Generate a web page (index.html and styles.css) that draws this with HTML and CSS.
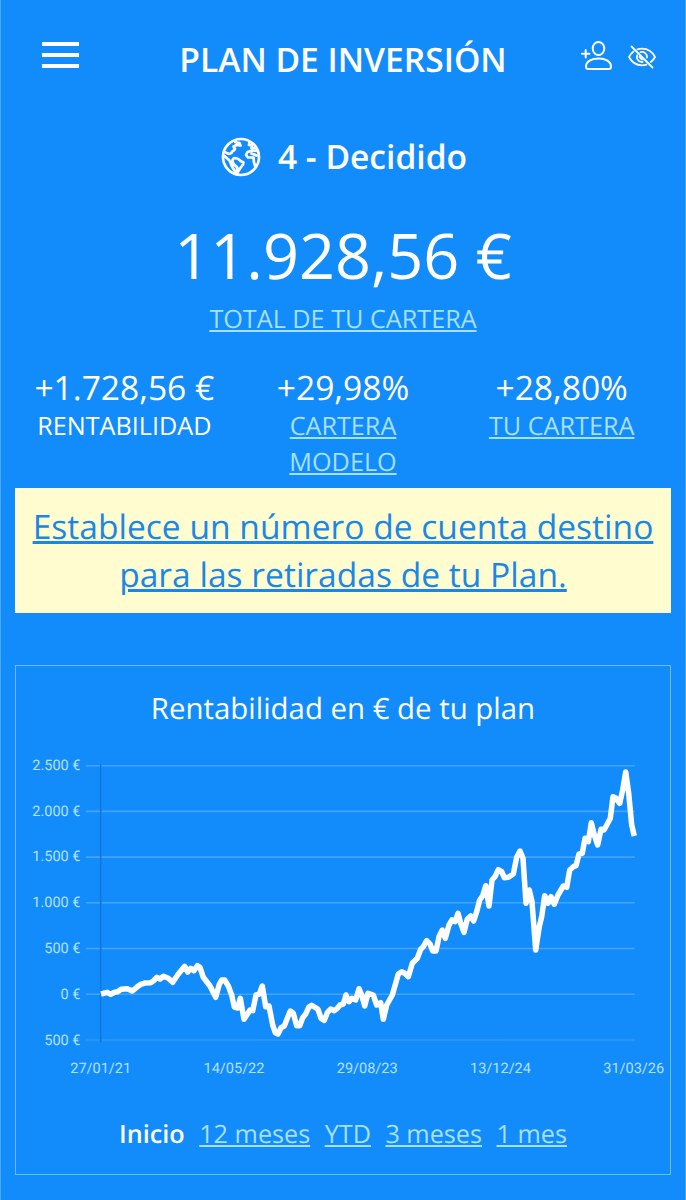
FILE: index.html
```
<!DOCTYPE html>
<html lang="es">
<head>
    <meta charset="UTF-8">
    <meta name="viewport" content="width=device-width, initial-scale=1.0">
    <title>Plan de inversión</title>
    <link rel="stylesheet" href="styles.css">
</head>
<body>
    <header class="topbar">
        <button class="menu" aria-label="Menú"><span></span><span></span><span></span></button>
        <h1>PLAN DE INVERSIÓN</h1>
        <div class="actions">
            <svg class="icon-user" viewBox="0 0 32 32">
                <ellipse cx="17.500" cy="7.500" rx="5.800" ry="6.500"/>
                <path d="M5 25.500c0-5 5.300-8 12.500-8s12.500 3 12.500 8c0 1.700-.7 2.500-2.200 2.500H7.200c-1.500 0-2.200-.8-2.200-2.500zM1 12.700h7.400M4.700 9v7.400"/>
            </svg>
            <svg class="icon-eye" viewBox="0 0 28 24">
                <path d="M3.500 1.500l21 21"/>
                <path d="M5.500 6.500C3.500 8 2 10 1 12c2.800 5.400 7.800 8.300 13 8.300 1.500 0 3-.2 4.400-.7M9.500 4.400c1.400-.5 3-.7 4.500-.7 5.200 0 10.200 2.900 13 8.300-1 2-2.400 3.700-4.200 5"/>
                <path d="M12.500 7.200c3.500-1 6.800 1.600 6.500 5.300M9.200 10.300c-1.200 3.500 1.300 7 5.300 6.700M11.500 12l2.500 2.500"/>
            </svg>
        </div>
    </header>

    <div class="profile">
        <svg class="icon-globe" viewBox="0 0 40 40">
            <circle cx="20" cy="20" r="18"/>
            <path d="M4 15c2.500 2 5 2 6.500 1 0-2.500 3-2 3.500-4l-1.500-2.500 3-1.500 4 .5-1-2.500-4.500-1"/>
            <path d="M3.500 19l5 4.500 2.500 6 5 8M11.500 23l1.500-2c3 0 5 1 6.500 3l3 1.500c0 3-2.500 4-3.500 6l-2.500 4-.5-5.500c-2.500-1.500-4.500-4-4.500-7z"/>
            <path d="M28.500 5l-.5 3 3 .5-.5 2.500h4M36 14l-5-.5-4.500 1.500-1.500 3 2 2.500 5.500 0 .5 5 1.500 4.500M30.500 16.500l5 2"/>
        </svg>
        <span>4 - Decidido</span>
    </div>

    <div class="total">
        <div class="amount">11.928,56 €</div>
        <a href="#">TOTAL DE TU CARTERA</a>
    </div>

    <div class="stats">
        <div class="stat">
            <div class="value">+1.728,56 €</div>
            <span>RENTABILIDAD</span>
        </div>
        <div class="stat">
            <div class="value">+29,98%</div>
            <a href="#">CARTERA MODELO</a>
        </div>
        <div class="stat">
            <div class="value">+28,80%</div>
            <a href="#">TU CARTERA</a>
        </div>
    </div>

    <div class="notice">
        <a href="#">Establece un número de cuenta destino para las retiradas de tu Plan.</a>
    </div>

    <div class="card">
        <h2>Rentabilidad en € de tu plan</h2>
        <svg class="chart" viewBox="16 750 654 340">
            <path class="grid" d="M86.500 765.700H634M86.500 811.400H634M86.500 857.100H634M86.500 902.800H634M86.500 948.500H634M86.500 994.300H634"/>
            <path class="grid grid-last" d="M86.500 1040H634"/>
            <path class="axis" d="M100.700 765V1042"/>
            <g class="y-labels">
                <text x="80.500" y="770">2.500 €</text>
                <text x="80.500" y="815.700">2.000 €</text>
                <text x="80.500" y="861.400">1.500 €</text>
                <text x="80.500" y="907.100">1.000 €</text>
                <text x="80.500" y="953">500 €</text>
                <text x="80.500" y="999">0 €</text>
                <text x="80.500" y="1044.700">500 €</text>
            </g>
            <g class="x-labels">
                <text x="100.700" y="1073">27/01/21</text>
                <text x="234" y="1073">14/05/22</text>
                <text x="367.200" y="1073">29/08/23</text>
                <text x="500.500" y="1073">13/12/24</text>
                <text x="633.700" y="1073">31/03/26</text>
            </g>
            <polyline class="line" points="101,994 107.3,992.3 110.7,994.3 114.7,992.3 117.7,991.7 121,989.3 127.3,988.7 132.3,991 136.7,987.3 140.7,984.3 145,983 150.7,982.7 153.3,981 157,977.3 160,979 163.3,976.3 168.3,978.3 172.7,982.3 178.3,974 184.7,966.3 187.7,972 190.7,968.3 194,970.7 197.3,965.7 200,967.3 203.3,977.3 210,986 215.7,997.3 219.3,984.3 221.7,980 224.7,980 228.3,986 231.7,995 234.3,1007 237.7,1008 240.3,998.3 244,1019.3 250,1010 252.7,1010.7 256,995 259.3,994 262.3,986 265.7,1006.7 269,1006 272.7,1025 275.3,1032.7 278,1034 281,1027.7 284.3,1026 287.3,1018.3 290.3,1011 293.3,1013.3 296.7,1025.7 299.7,1025.7 302.7,1017.7 305.7,1014 308.7,1007.3 311.7,1005.3 318,1009.3 321,1018.3 324.3,1020.3 327.3,1012.7 330.7,1009 334.3,1010.7 337.3,1008.3 340,1005 343.3,1004 346,995 349,1001.7 352,998.3 355.7,1000 359,988.7 361.7,995 364.7,1006 368,993.3 373.3,995 376.7,1005 380.7,1002.7 383.3,1019.3 386.7,1005 392.3,995 395.7,983.3 398.3,974 401.7,971.7 404.7,973.3 408.3,976.7 412.3,963.3 417.3,958.3 420.7,949.3 423.3,946.7 426.7,940.7 430,944 432.7,951 436,951 439,936.7 442.3,930 445.3,938.3 449,925 452,920 455,921.7 458,913.3 460.7,923.3 464,932.3 467.3,919.3 470.7,916 473.7,921 476.7,911.7 479.7,900 482.7,895.7 485.7,885.7 489,906 492,880 495,876.7 498.3,869.7 501.7,871.7 504.3,877.7 508.3,877.3 513.3,874 516.7,857.3 520,851 523,858.3 526,903.3 529.3,890 532,901.7 535.7,950 539.3,926.7 541.7,916.7 544.7,895.7 548,903.3 551,896.7 554.3,904.3 558,895 563.3,886 566.7,887.3 569.7,870 573.3,866.7 576,865.7 579,854 582.3,853.3 585,838.3 588.3,841.7 591.3,822.7 594.3,835 597.7,845 601,829.3 604,830 607.3,824 610.3,818.3 613,796.7 616,798.3 619.7,803.3 622.7,790 625.7,772 628.7,793.3 631.7,825 634.3,836"/>
        </svg>
        <nav class="periods">
            <strong>Inicio</strong>
            <a href="#">12 meses</a>
            <a href="#">YTD</a>
            <a href="#">3 meses</a>
            <a href="#">1 mes</a>
        </nav>
    </div>
</body>
</html>
```

FILE: styles.css
```
* {
    box-sizing: border-box;
}
body {
    margin: 0;
    height: 1200px;
    overflow: hidden;
    padding: 0 14px;
    background: #128bfb;
    border-left: 1px solid #4ba8fd;
    border-right: 1px solid #4ba8fd;
    color: #fff;
    font-family: "Open Sans", sans-serif;
    text-align: center;
    text-rendering: geometricPrecision;
}
svg {
    display: block;
    fill: none;
    stroke: #fff;
    stroke-linecap: round;
    stroke-linejoin: round;
}
a {
    color: #a8e0ff;
    text-underline-offset: 2px;
    text-decoration-thickness: 2px;
}
.topbar {
    display: grid;
    grid-template-columns: 120px 1fr 120px;
    align-items: center;
    height: 120px;
}
.menu {
    display: flex;
    flex-direction: column;
    gap: 7px;
    width: 37px;
    margin: -10px 0 0 27px;
    padding: 0;
    border: none;
    background: none;
}
.menu span {
    height: 4px;
    background: #fff;
}
h1 {
    margin: -2px 0 0;
    font-size: 33.6px;
    font-weight: 600;
    white-space: nowrap;
}
.actions {
    display: flex;
    align-items: center;
    justify-content: flex-end;
    gap: 15px;
    margin: -7px 15px 0 0;
}
.icon-user {
    width: 32px;
    height: 32px;
    stroke-width: 2;
}
.icon-eye {
    width: 28px;
    height: 24px;
    stroke-width: 1.8;
}
.profile {
    display: flex;
    align-items: center;
    justify-content: center;
    gap: 17px;
    height: 73px;
    padding-left: 2px;
    font-size: 33.6px;
    font-weight: 600;
}
.profile span {
    margin-top: -1px;
}
.icon-globe {
    width: 40px;
    height: 40px;
    stroke-width: 2.7;
}
.amount {
    margin-top: 19px;
    font-size: 63px;
    line-height: 88px;
}
.total a {
    display: block;
    font-size: 25.2px;
    line-height: 38px;
}
.stats {
    display: grid;
    grid-template-columns: repeat(3, 1fr);
    height: 150px;
    padding-top: 28px;
}
.stat {
    padding: 0 10px;
    font-size: 25.2px;
    line-height: 36px;
}
.value {
    margin-bottom: -1px;
    font-size: 33.6px;
    line-height: 43px;
    white-space: nowrap;
}
.notice {
    height: 125px;
    padding-top: 14px;
    background: #fffdd0;
    font-size: 33.6px;
    line-height: 48px;
}
.notice a {
    color: #1b87e5;
    text-decoration-thickness: 3px;
}
.card {
    height: 510px;
    margin-top: 52px;
    border: 1px solid #6abcfd;
}
h2 {
    margin: 22px 0 0;
    font-size: 29.4px;
    font-weight: 400;
    line-height: 40px;
}
.chart {
    width: 654px;
    height: 340px;
    margin-top: 22px;
}
.chart text {
    fill: #b5e2ff;
    stroke: none;
    font-family: Roboto, sans-serif;
    font-size: 14.5px;
}
.y-labels {
    text-anchor: end;
}
.x-labels {
    text-anchor: middle;
}
.grid {
    stroke: #45a5fd;
    stroke-width: 1.6;
}
.grid-last {
    stroke: #2f98fa;
}
.axis {
    stroke: #0f78df;
    stroke-width: 1.6;
}
.line {
    stroke-width: 5.5;
    stroke-linecap: butt;
}
.periods {
    display: flex;
    justify-content: center;
    gap: 14.5px;
    margin-top: 26px;
    font-size: 25.2px;
    line-height: 36px;
}
.periods strong {
    font-weight: 600;
}
```
